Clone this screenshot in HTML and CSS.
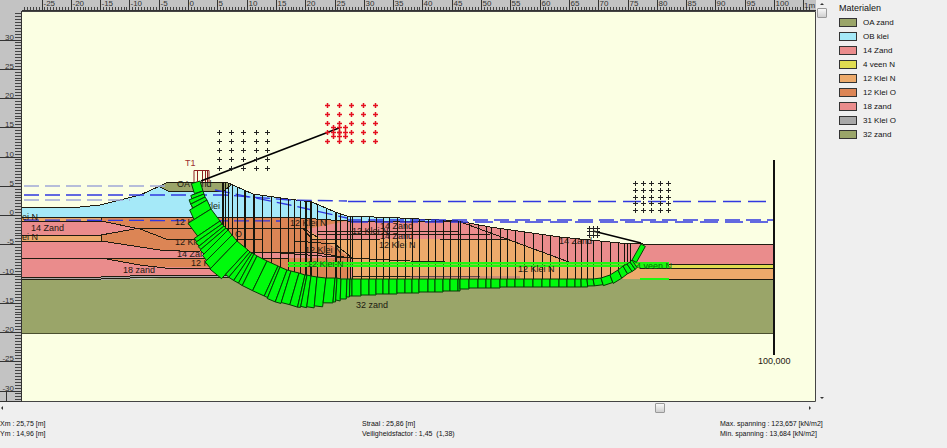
FILE: index.html
```html
<!DOCTYPE html>
<html lang="nl">
<head>
<meta charset="utf-8">
<title>Glijvlak</title>
<link rel="stylesheet" href="styles.css">
</head>
<body>
<div class="app">
  <main class="work">
    <div class="corner"></div>
    <svg class="ruler-top" id="rulerTop" viewBox="22 0 794 11" aria-label="Horizontale liniaal"></svg>
    <div class="vscroll">
      <button class="arrow up" type="button" aria-label="Omhoog"></button>
      <input class="range vertical" type="range" min="0" max="100" value="0" aria-label="Verticaal schuiven">
      <button class="arrow down" type="button" aria-label="Omlaag"></button>
    </div>
    <svg class="ruler-left" id="rulerLeft" viewBox="0 11 22 391" preserveAspectRatio="xMinYMin meet" aria-label="Verticale liniaal"></svg>
    <svg class="drawing" viewBox="22 11 794 391" aria-label="Dwarsdoorsnede">
      <rect class="paper" x="22" y="11" width="794" height="391"/>

      <!-- soil layers -->
      <path class="olive" d="M22 279H140L200 276H774V333H22Z"/>
      <path class="rose" d="M22 221H458L490 227L560 237L620 243L643 244H774V277H22Z"/>
      <path class="grey" d="M22 277H101L160 275H320V278H160L101 280H22Z"/>
      <path class="sky" d="M22 207H80L100 205L140 195L160 186L168 182H226L253 194L288 199L312 202L335 212L347 216L400 218L458 221L347 221L300 218L22 217Z"/>
      <path class="olive" d="M160 187L168 182H226L231 185L224 191H168Z"/>
      <path class="brown" d="M101 217L300 218L347 221L307 229L350 258V278H300L288 258H350L318 253L200 252L160 250L101 241V235L140 228L101 221Z"/>
      <path class="brown" d="M101 258H350V278H300L280 268L165 267L140 265Z"/>
      <path class="rose" d="M200 252L318 253L350 258H200Z"/>
      <path class="sand" d="M22 217H101V221H22ZM22 235H101V241H22Z"/>
      <path class="rose" d="M347 221H458L490 227L560 237L620 243H640V263H569L518 239H312L307 230Z"/>
      <path class="sand" d="M307 229L313 239H508L569 262H640V279H352V259Z"/>
      <path class="rose" d="M458 221L490 227L560 237L620 243L643 244H774V264H569L516 240Z"/>
      <path class="sand" d="M569 268H774V279H569Z"/>
      <path class="yellow" d="M640 265H774V268H640Z"/>

      <!-- layer boundaries -->
      <g class="edge">
        <path d="M22 207H80L100 205L140 195L160 186L168 182H226L253 194L288 199L312 202L335 212L347 216L400 218L458 221L490 227L560 237L620 243L643 244H774"/>
        <path d="M160 187L168 191H224L231 185"/>
        <path d="M22 217H101L300 218L347 221H458"/>
        <path d="M101 217V221M101 235V241M22 221H101L140 229L166 239H262"/>
        <path d="M22 235H101L140 228H300M22 241H101L160 250L200 252L318 253L350 258"/>
        <path d="M22 258H288M101 258L140 265L165 268H220"/>
        <path d="M22 277H101L160 275H230M22 279H101L160 277H230"/>
        <path d="M280 228H303L317 237M294 241L335 244L352 258V279M303 229L312 239H380M280 253L350 258L410 261L445 262"/>
        <path d="M318 231H458M318 234H475M440 234H490M440 239H508M458 221L569 262"/>
        <path d="M774 264H640M774 268H640M774 279H640M352 276H480"/>
      </g>
      <path class="edge soft" d="M22 333H774"/>
      <path class="pink-line" d="M410 277H520"/>

      <!-- water levels -->
      <path class="water pale" d="M24 186H165M24 200H130"/>
      <path class="water" d="M24 195H225L290 200L347 201"/>
      <path class="water" d="M215 190L290 205L347 218"/>
      <path class="water" d="M24 220L280 221"/>
      <path class="water main" d="M348 201.500H774"/>
      <path class="water" d="M347 220H774"/>
      <path class="water main" d="M350 222H774"/>

      <g id="slices" class="slices"></g>
      <path class="lime" d="M288 262H640V264.500H288ZM288 265H640V267H288ZM640 262H669V268H640ZM640 278H669V280H640Z"/>

      <g class="label">
        <text x="177" y="187">OA zand</text>
        <text x="191" y="209">OB klei</text>
        <text x="175" y="225">12 Klei O</text>
        <text x="175" y="245">12 Klei O</text>
        <text x="177" y="257">14 Zand</text>
        <text x="191" y="266">12 Klei O</text>
        <text x="235" y="237">O</text>
        <text x="31" y="231">14 Zand</text>
        <text x="22" y="220">ei N</text>
        <text x="22" y="240">ei N</text>
        <text x="123" y="273">18 zand</text>
        <text x="290" y="226">12 Klei N</text>
        <text x="305" y="253">12 Klei N</text>
        <text x="352" y="234">12 Klei N</text>
        <text x="380" y="229">14 Zand</text>
        <text x="380" y="239">14 Zand</text>
        <text x="379" y="248">12 Klei N</text>
        <text x="356" y="308">32 zand</text>
        <text x="559" y="244">14 Zand</text>
        <text x="518" y="272">12 Klei N</text>
        <text class="dim" x="307" y="267">12 Klei N</text>
        <text class="dim" x="636" y="269">4 veen N</text>
        <text x="758" y="364">100,000</text>
      </g>

      <g id="blocks" class="blocks"></g>

      <path class="load" d="M194 182V170.500H209V182M197.500 170V182M202.500 170V182M205.500 170V182M207.500 170V182"/>
      <text class="load-label" x="185" y="166">T1</text>
      <path class="ray" d="M201 181L339 128M593 231L641 243"/>
      <path class="axis" d="M774 160V355"/>
      <g id="crosses"></g>
      <path class="frame" d="M22 11.500H815.500V401.500H22"/>
    </svg>
    <div class="hscroll">
      <button class="arrow left" type="button" aria-label="Links"></button>
      <input class="range" type="range" min="0" max="1000" value="824" aria-label="Horizontaal schuiven">
      <button class="arrow right" type="button" aria-label="Rechts"></button>
    </div>
    <footer class="status">
      <div>Xm : 25,75 [m]<br>Ym : 14,96 [m]</div>
      <div>Straal : 25,86 [m]<br>Veiligheidsfactor : 1,45 &nbsp;(1,38)</div>
      <div>Max. spanning : 123,657 [kN/m2]<br>Min. spanning : 13,684 [kN/m2]</div>
    </footer>
  </main>
  <aside class="legend">
    <h1>Materialen</h1>
    <ul>
      <li><span class="swatch olive"></span>OA zand</li>
      <li><span class="swatch sky"></span>OB klei</li>
      <li><span class="swatch rose"></span>14 Zand</li>
      <li><span class="swatch yellow"></span>4 veen N</li>
      <li><span class="swatch sand"></span>12 Klei N</li>
      <li><span class="swatch brown"></span>12 Klei O</li>
      <li><span class="swatch rose"></span>18 zand</li>
      <li><span class="swatch grey"></span>31 Klei O</li>
      <li><span class="swatch olive"></span>32 zand</li>
    </ul>
  </aside>
</div>
<script src="drawing.js"></script>
</body>
</html>
```
FILE: styles.css
```css
* { box-sizing: border-box; }

body {
  margin: 0;
  background: #efefef;
  color: #111;
  font-family: "Liberation Sans", Arial, sans-serif;
  font-size: 8px;
}

.app {
  display: grid;
  grid-template-columns: minmax(0, 1fr) 116px;
  min-height: 100vh;
}

.work {
  display: grid;
  grid-template-columns: 22px minmax(0, 1fr) 15px;
  grid-template-rows: auto auto 11px auto;
  align-content: start;
}

.corner, .ruler-top, .ruler-left { background: #c3c3c3; }
svg { display: block; width: 100%; }
.ruler-left { height: 100%; }

.tick { stroke: #333; stroke-width: 1; shape-rendering: crispEdges; }
.tick.minor { stroke: #444; }
.ruler-text { font-size: 8px; fill: #333; }

.olive { fill: #9aa569; background: #9aa569; }
.sky { fill: #a5e9f8; background: #a5e9f8; }
.rose { fill: #ea8c8c; background: #ea8c8c; }
.yellow { fill: #e0dc50; background: #e0dc50; }
.sand { fill: #edaa6b; background: #edaa6b; }
.brown { fill: #dc8555; background: #dc8555; }
.grey { fill: #a8a8a8; background: #a8a8a8; }
.paper { fill: #fbffe3; }
.lime { fill: #20f510; }

.edge { fill: none; stroke: #201c10; stroke-width: 1; shape-rendering: crispEdges; }
.edge.soft { stroke: #4a5030; }
.pink-line { stroke: #b07080; }
.water { fill: none; stroke: #3038e0; stroke-width: 1.3; stroke-dasharray: 15 6; }
.water.pale { stroke: #a0a8d8; }
.water.main { stroke-width: 1.5; stroke-dasharray: 18 7; }
.slices { stroke: #15150c; stroke-width: 1; shape-rendering: crispEdges; }
.blocks { fill: #00fa0c; stroke: #063c06; stroke-width: 1; stroke-linejoin: round; }
.label { font-size: 9px; fill: #1c1810; }
.dim { fill: #076a0c; }
.load { fill: none; stroke: #8c2020; }
.load-label { font-size: 9px; fill: #9c3030; }
.ray { stroke: #000; stroke-width: 1.5; }
.axis { stroke: #111; stroke-width: 2; shape-rendering: crispEdges; }
.cross { stroke: #222; stroke-width: 1; }
.cross.red { stroke: #e41020; stroke-width: 1.5; }
.frame { fill: none; stroke: #444; }

.vscroll { grid-column: 3; grid-row: 1 / 3; display: flex; flex-direction: column; }
.hscroll { grid-column: 1 / 3; display: flex; align-items: center; }

.arrow {
  flex: none;
  width: 12px;
  height: 8px;
  padding: 0;
  border: 0;
  background: none;
  display: grid;
  place-items: center;
}
.arrow::before { content: ""; border: 2px solid transparent; }
.arrow.up::before { border-bottom-color: #333; border-top: 0; }
.arrow.down::before { border-top-color: #333; border-bottom: 0; }
.arrow.left { width: 4px; }
.arrow.left::before { border-right-color: #333; border-left: 0; }
.arrow.right::before { border-left-color: #333; border-right: 0; }

.range {
  appearance: none;
  flex: 1;
  min-width: 0;
  min-height: 0;
  height: 11px;
  margin: 0;
  background: none;
}
.range.vertical { width: 12px; height: auto; writing-mode: vertical-lr; }
.range::-webkit-slider-thumb {
  appearance: none;
  width: 10px;
  height: 10px;
  border: 1px solid #999;
  border-radius: 1px;
  background: linear-gradient(#f8f8f8, #cfcfcf);
}

.status {
  grid-column: 1 / -1;
  display: grid;
  grid-template-columns: 362fr 358fr 111fr;
  padding-top: 6px;
  line-height: 10px;
  font-size: 7px;
  white-space: nowrap;
}

.legend { padding: 3px 8px; }
.legend h1 { margin: 0 0 2px; font-size: 9px; line-height: 10px; font-weight: 400; }
.legend ul { margin: 0; padding: 0; list-style: none; }
.legend li { display: flex; align-items: center; gap: 6px; height: 14px; }
.swatch { width: 18px; height: 9px; border: 1px solid #333; }
```
FILE: drawing.js
```js
const NS = "http://www.w3.org/2000/svg";

function add(parent, tag, attrs, text) {
  const node = document.createElementNS(NS, tag);
  for (const key in attrs) node.setAttribute(key, attrs[key]);
  if (text !== undefined) node.textContent = text;
  parent.appendChild(node);
}

// Metres to drawing units
const px = m => 188.5 + m * 5.86;
const py = m => 215.5 - m * 5.85;

const rulerTop = document.getElementById("rulerTop");
for (let m = -28; m <= 106; m += 0.5) {
  const major = m % 5 === 0;
  const x = Math.floor(px(m)) + 0.5;
  add(rulerTop, "path", { class: major ? "tick" : "tick minor", d: `M${x} ${major ? 0 : 7}V10` });
  if (major && m <= 100) add(rulerTop, "text", { class: "ruler-text", x: x + 1, y: 6 }, m);
}
add(rulerTop, "path", { class: "tick", d: "M22 10.5H816" });
add(rulerTop, "text", { class: "ruler-text", x: 804, y: 8 }, "1m");

const rulerLeft = document.getElementById("rulerLeft");
for (let m = 34.5; m >= -31.5; m -= 0.5) {
  const major = m % 5 === 0;
  const y = Math.floor(py(m)) + 0.5;
  add(rulerLeft, "path", { class: major ? "tick" : "tick minor", d: `M${major ? 0 : 15} ${y}H21` });
  if (major) add(rulerLeft, "text", { class: "ruler-text", x: 14, y: y - 1, "text-anchor": "end" }, m);
}
add(rulerLeft, "path", { class: "tick", fill: "none", d: "M21.5 11V402M0 391.5H6.5V401M0 401.5H22" });

// Slip surface: inner edge points, with the stress bar length of each slice
const slip = [
  [200,181],[203,191,9],[204,194,13],[205,197,16],[207,200,16],[211,209,20],[220,221,27],
  [222,224,31],[224,226,32],[226,228,33],[228,230,34],[232,235,36],[237,241,38],[248,250,39],
  [250,252,33],[252,253,33],[254,254,33],[257,256,33],[267,261,33],[278,266,33],[280,267,33],
  [287,270,34],[291,271,34],[299,273,33],[305,275,33],[307,275,33],[311,276,32],[317,277,31],
  [326,278,29],[335,278,25],[337,278,24],[341,279,22],[347,279,20],[350,279,18],[352,279,17],[361,279,17],
  [369,279,16],[376,279,16],[383,279,15],[389,279,15],[397,279,15],[405,279,14],[412,279,14],
  [419,279,14],[428,279,13],[435,279,13],[443,279,13],[450,279,12],[458,279,12],[460,279,12],
  [469,279,10],[478,279,9],[486,279,9],[491,279,9],[500,279,9],[507,279,8],[515,279,8],
  [524,279,8],[533,279,8],[542,279,8],[550,279,8],[559,279,8],[567,279,8],[575,279,8],
  [581,279,8],[587,279,8],[593,279,7],[601,278,7],[610,275,8],[618,270,9],[623,266,9],
  [627,264,9],[630,262,9],[632,260,9],[641,244,5]
];

// Outward direction of the surface at a point, taken over its neighbours
function outward(i) {
  const a = slip[Math.max(0, i - 3)];
  const b = slip[Math.min(slip.length - 2, i + 3)];
  const len = Math.hypot(b[0] - a[0], b[1] - a[1]);
  return [-(b[1] - a[1]) / len, (b[0] - a[0]) / len];
}

const blocks = document.getElementById("blocks");
for (let i = 1; i < slip.length; i++) {
  const [x1, y1] = slip[i - 1];
  const [x2, y2, t] = slip[i];
  let n1 = outward(i - 1);
  let n2 = outward(i);
  if (i === 1 || i === slip.length - 1) {
    const len = Math.hypot(x2 - x1, y2 - y1);
    n1 = n2 = [-(y2 - y1) / len, (x2 - x1) / len];
  }
  add(blocks, "path", {
    d: `M${x1} ${y1}L${x2} ${y2}L${x2 + n2[0] * t} ${y2 + n2[1] * t}L${x1 + n1[0] * t} ${y1 + n1[1] * t}Z`
  });
}

// Slice dividers run from ground level to the slip surface
const ground = [[168,182],[226,182],[253,194],[288,199],[312,202],[335,212],[347,216],[400,218],[458,221],[490,227],[560,237],[620,243],[643,244]];
function heightAt(line, x) {
  for (let i = 1; i < line.length; i++) {
    if (x <= line[i][0]) {
      const [a, b] = line[i - 1];
      const [c, d] = line[i];
      return b + (d - b) * (x - a) / (c - a);
    }
  }
  return line[line.length - 1][1];
}
const dividers = [222,223,225,228,232,237,244,245,253,254,262,271,280,288,294,300,305,306,310,311,317,326,335,336,340,347,350,352,
  361,369,376,383,389,397,405,412,419,428,435,443,450,458,460,469,478,486,491,500,507,515,524,533,542,550,559,567,575,
  581,587,593,601,610,618,624,627,630];
const slices = document.getElementById("slices");
for (const x of dividers) {
  add(slices, "path", { d: `M${x + 0.5} ${heightAt(ground, x)}V${heightAt(slip, x)}` });
}

const crosses = document.getElementById("crosses");
function grid(xs, ys, red) {
  for (const x of xs) for (const y of ys) {
    add(crosses, "path", {
      class: red ? "cross red" : "cross",
      d: `M${x - 2} ${y + 0.5}h5M${x + 0.5} ${y - 2}v5`
    });
  }
}
grid([219, 231, 243, 256, 267], [132, 141, 150, 159, 168]);
grid([327, 339, 351, 363, 375], [105, 114, 123, 132, 141], true);
grid([333, 339, 345], [127, 132, 136], true);
grid([635, 643, 651, 660, 668], [183, 190, 197, 203, 210]);
grid([589, 593, 597], [228, 231, 235]);
```
